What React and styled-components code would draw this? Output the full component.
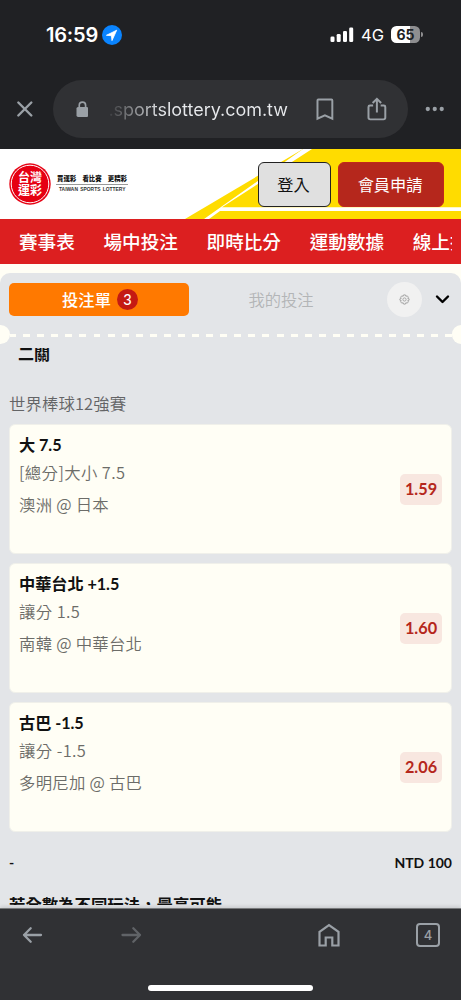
import React from 'react';
import styled, { createGlobalStyle } from 'styled-components';

const GlobalStyle = createGlobalStyle`
  * {
    box-sizing: border-box;
  }
  body {
    margin: 0;
    background: #e3e5e8;
    font-family: Lato, 'Noto Sans CJK TC', sans-serif;
  }
`;

const Screen = styled.div`
  display: flex;
  flex-direction: column;
  width: 461px;
  height: 1000px;
  overflow: hidden;
`;

const BrowserTop = styled.div`
  height: 149px;
  flex: none;
  background: #202124;
`;

const StatusBar = styled.div`
  display: flex;
  align-items: center;
  height: 80px;
  padding: 0 38px 11px 46px;
  color: #fff;
  font-family: Inter, sans-serif;
`;

const Clock = styled.span`
  width: 56px;
  font-size: 20px;
  font-weight: 600;
  letter-spacing: -0.2px;
  white-space: nowrap;
`;

const StatusRight = styled.div`
  display: flex;
  align-items: center;
  margin-left: auto;
`;

const Network = styled.span`
  width: 30px;
  margin-left: 7px;
  font-size: 16.5px;
  font-weight: 400;
`;

const Battery = styled.div`
  width: 29px;
  height: 17px;
  border-radius: 5.5px;
  background: linear-gradient(90deg, #fff 65%, #8e8e90 65%);
  color: #202124;
  font-size: 14px;
  font-weight: 700;
  line-height: 17px;
  text-align: center;
`;

const BatteryTip = styled.div`
  width: 2px;
  height: 5px;
  margin-left: 1px;
  border-radius: 0 2px 2px 0;
  background: #8e8e90;
`;

const AddressRow = styled.div`
  display: flex;
  align-items: center;
  height: 58px;
  padding: 0 16px;
`;

const AddressBar = styled.div`
  display: flex;
  align-items: center;
  width: 355px;
  height: 58px;
  margin: 0 17px 0 18px;
  padding: 0 21px 0 23px;
  border-radius: 29px;
  background: #303134;
`;

const Url = styled.span`
  width: 182px;
  margin: 0 28px 0 20px;
  font-family: Inter, sans-serif;
  font-size: 18px;
  letter-spacing: -0.03px;
  white-space: nowrap;
  color: transparent;
  background: linear-gradient(90deg, #38393c, #e8eaed 55px);
  background-clip: text;
`;

const SiteHeader = styled.header`
  display: grid;
  grid-template: 69.5px / 461px;
  flex: none;
  height: 69.5px;
  background: #fff;
  overflow: hidden;

  & > * {
    grid-area: 1 / 1;
  }
`;

const HeaderContent = styled.div`
  display: flex;
  align-items: center;
  padding: 0 17.5px 0 9px;
`;

const Slogan = styled.div`
  width: 72px;
  margin: 0 0 1px 5px;
`;

const SloganText = styled.div`
  display: flex;
  justify-content: space-between;
  padding: 0 1px;
  border-bottom: 1px solid #999;
  color: #111;
  font-size: 6.4px;
  font-weight: 900;
  line-height: 11px;
  white-space: nowrap;
`;

const SloganSub = styled.div`
  margin-left: 3px;
  color: #333;
  font: 700 4.9px/9px 'Liberation Sans', sans-serif;
  word-spacing: 1px;
  white-space: nowrap;
`;

const HeaderButton = styled.button`
  width: ${(p) => p.$width}px;
  height: 45px;
  margin-top: 1px;
  margin-left: ${(p) => p.$left};
  padding: 0 1px 0 0;
  border: ${(p) => (p.$primary ? '1px solid #c1271b' : '1.5px solid #222')};
  border-radius: 6px;
  background: ${(p) => (p.$primary ? '#b5271c' : '#e0e0e0')};
  color: ${(p) => (p.$primary ? '#fff' : '#111')};
  font-family: 'Noto Sans CJK TC', sans-serif;
  font-size: 16.2px;
`;

const Nav = styled.nav`
  display: flex;
  flex: none;
  gap: 28.7px;
  height: 45px;
  padding-left: 19px;
  border-right: 9px solid #dc1f20;
  overflow: hidden;
  background: #dc1f20;
  color: #fff;
  font: 500 18.6px/44px 'Noto Sans CJK TC', sans-serif;
  white-space: nowrap;
`;

const SlipArea = styled.main`
  flex: 1;
  min-height: 0;
  padding-top: 9.5px;
  overflow: hidden;
  background: #fffef5;
`;

const Slip = styled.section`
  display: flex;
  flex-direction: column;
  height: 100%;
  border-radius: 10px 10px 0 0;
  background: #e3e5e8;
`;

const Tabs = styled.div`
  display: flex;
  align-items: center;
  flex: none;
  height: 52px;
  padding: 0 11px 0 9px;
`;

const Tab = styled.div`
  display: flex;
  align-items: center;
  justify-content: center;
  gap: 6px;
  width: ${(p) => (p.$active ? 180 : 178)}px;
  height: 33px;
  padding-left: ${(p) => (p.$active ? 2 : 0)}px;
  margin-right: ${(p) => (p.$active ? '3px' : '17px')};
  border-radius: 5px;
  background: ${(p) => (p.$active ? '#ff7900' : 'transparent')};
  color: ${(p) => (p.$active ? '#fff' : '#b3b5b7')};
  font: ${(p) => (p.$active ? 500 : 350)} 16.3px/32px 'Noto Sans CJK TC', sans-serif;
`;

const Count = styled.span`
  width: 21px;
  height: 21px;
  border-radius: 50%;
  background: #c41a13;
  font: 500 14.5px/21px Lato, sans-serif;
  text-align: center;
`;

const Settings = styled.div`
  display: grid;
  place-items: center;
  width: 35px;
  height: 35px;
  margin-right: 13px;
  border-radius: 50%;
  background: #f1f1f1;
`;

const Perforation = styled.div`
  display: flex;
  align-items: center;
  justify-content: space-between;
  flex: none;
  height: 19px;
`;

const Notch = styled.div`
  width: 9.5px;
  height: 19px;
  border-radius: ${(p) => (p.$right ? '10px 0 0 10px' : '0 10px 10px 0')};
  background: #fffef5;
`;

const Dashes = styled.div`
  flex: 1;
  height: 2.5px;
  margin-top: 2px;
  background: repeating-linear-gradient(90deg, #fffef5 0 6px, transparent 6px 13.1px, #fffef5 13.1px 14.08px);
`;

const SlipBody = styled.div`
  flex: 1;
  min-height: 0;
  margin-top: 4px;
  padding: 0 9px;
  overflow: hidden;
`;

const Parlay = styled.div`
  margin: -7px 0 0 9px;
  height: 26px;
  color: #111;
  font-size: 16px;
  font-weight: 700;
  line-height: 26px;
`;

const League = styled.div`
  height: 57px;
  padding-top: 23px;
  color: #636466;
  font: 350 16.4px/26px 'Noto Sans CJK TC', sans-serif;
  letter-spacing: 0.1px;
`;

const BetCard = styled.article`
  display: flex;
  align-items: center;
  justify-content: space-between;
  height: 130px;
  margin-bottom: 9px;
  padding: 0 9px;
  border: 1px solid #f0f0ea;
  border-radius: 6px;
  background: #fffef5;
`;

const BetInfo = styled.div`
  align-self: flex-start;
  padding-top: 7px;
`;

const Pick = styled.div`
  color: #111;
  font-size: 16.2px;
  font-weight: 700;
  letter-spacing: -0.05px;
  line-height: 26px;
`;

const BetText = styled.div`
  height: ${(p) => p.$height}px;
  color: #6c6c68;
  font: 350 16.4px/28px 'Noto Sans CJK TC', sans-serif;
  letter-spacing: ${(p) => p.$spacing}px;
`;

const Odds = styled.div`
  width: 42px;
  height: 31px;
  border-radius: 5px;
  background: #f8e7e0;
  color: #b5271c;
  font-size: 16.3px;
  font-weight: 700;
  line-height: 30px;
  text-align: center;
`;

const StakeRow = styled.div`
  display: flex;
  justify-content: space-between;
  height: 41px;
  padding-top: 11px;
  color: #111;
  font-size: 14px;
  font-weight: 700;
  line-height: 22px;
`;

const Note = styled.div`
  height: 23px;
  overflow: hidden;
  color: #111;
  font-size: 16.4px;
  font-weight: 700;
  line-height: 45px;
`;

const BrowserBottom = styled.footer`
  display: flex;
  flex-direction: column;
  flex: none;
  height: 92px;
  border-top: 1px solid #77787a;
  background: #303134;
  box-shadow: 0 -1px 4px rgba(0, 0, 0, 0.15);
`;

const Toolbar = styled.div`
  display: flex;
  align-items: center;
  height: 51px;
  padding: 0 20px 0 22px;
`;

const Spacer = styled.div`
  width: ${(p) => p.$width}px;
`;

const TabCount = styled.div`
  width: 24px;
  height: 24px;
  border: 2px solid #9aa0a6;
  border-radius: 4px;
  color: #9aa0a6;
  font: 500 13px/20px Inter, sans-serif;
  text-align: center;
`;

const HomeIndicator = styled.div`
  width: 165px;
  height: 6px;
  margin: 25px auto 0;
  border-radius: 3px;
  background: #fff;
`;

const navItems = ['賽事表', '場中投注', '即時比分', '運動數據', '線上投注'];

const bets = [
  { pick: '大 7.5', market: '[總分]大小 7.5', match: '澳洲 @ 日本', odds: '1.59' },
  { pick: '中華台北 +1.5', market: '讓分 1.5', match: '南韓 @ 中華台北', odds: '1.60' },
  { pick: '古巴 -1.5', market: '讓分 -1.5', match: '多明尼加 @ 古巴', odds: '2.06' },
];

const LocationIcon = () => (
  <svg width="20" height="20" viewBox="0 0 20 20">
    <circle cx="10" cy="10" r="10" fill="#0a84ff" />
    <path d="M14.7 5.2 4.4 10.3 9.4 10.7 10 15.6Z" fill="#fff" stroke="#fff" strokeWidth="0.8" strokeLinejoin="round" />
  </svg>
);

const SignalIcon = () => (
  <svg width="24" height="15" viewBox="0 0 24 15" fill="#fff">
    <rect x="0.5" y="9.5" width="4" height="5.5" rx="1.3" />
    <rect x="6.7" y="7" width="4" height="8" rx="1.3" />
    <rect x="13" y="4" width="4" height="11" rx="1.3" />
    <rect x="19.2" y="0.5" width="4" height="14.5" rx="1.3" />
  </svg>
);

const CloseIcon = () => (
  <svg width="20" height="18" viewBox="0 0 20 18" fill="none" stroke="#9aa0a6" strokeWidth="2.6" strokeLinecap="round">
    <path d="M2.5 2 16.5 16M16.5 2 2.5 16" />
  </svg>
);

const LockIcon = () => (
  <svg width="13" height="17" viewBox="0 0 13 17">
    <rect x="0.5" y="6" width="12" height="10" rx="1.6" fill="#9aa0a6" />
    <path d="M3.3 7V4.2a3.2 3.2 0 0 1 6.4 0V7" fill="none" stroke="#9aa0a6" strokeWidth="1.7" />
  </svg>
);

const BookmarkIcon = () => (
  <svg width="18" height="23" viewBox="0 0 18 23" fill="none" stroke="#9aa0a6" strokeWidth="2">
    <path d="M1.5 2.3Q1.5 1.5 2.3 1.5H15.7Q16.5 1.5 16.5 2.3V20.8L9 17.3 1.5 20.8Z" />
  </svg>
);

const ShareIcon = () => (
  <svg width="20" height="24" viewBox="0 0 20 24" fill="none" stroke="#9aa0a6" strokeWidth="2">
    <path d="M6.2 8.5H3Q1.5 8.5 1.5 10V20.7Q1.5 22.5 3.3 22.5H16.7Q18.5 22.5 18.5 20.7V10Q18.5 8.5 17 8.5H13.8M10 15.5V2M5.7 6 10 1.7 14.3 6" />
  </svg>
);

const MoreIcon = () => (
  <svg width="22" height="6" viewBox="0 0 22 6" fill="#9aa0a6">
    <circle cx="3" cy="3" r="2.3" />
    <circle cx="10.5" cy="3" r="2.3" />
    <circle cx="18" cy="3" r="2.3" />
  </svg>
);

const HeaderStripes = () => (
  <svg width="461" height="70" viewBox="0 0 461 70">
    <path d="M185 70 303 0H461V70Z" fill="#ffdc00" />
    <path d="M204 70 303 0H312L222 58.3H461V62H220L209 70Z" fill="#fff" />
  </svg>
);

const Logo = () => (
  <svg width="42" height="42" viewBox="0 0 42 42">
    <circle cx="21" cy="21" r="20.7" fill="#e60012" />
    <circle cx="21" cy="21" r="18.8" fill="none" stroke="#fff" strokeWidth="1" />
    <g fill="#fff" fontFamily="'Noto Sans CJK TC', sans-serif" fontWeight="700" fontSize="12" textAnchor="middle">
      <text x="21" y="19.4">台灣</text>
      <text x="21" y="31.8">運彩</text>
    </g>
  </svg>
);

const GearIcon = () => (
  <svg width="11" height="11" viewBox="0 0 24 24" fill="none" stroke="#a0a0a0" strokeWidth="2">
    <path d="M10 2h4l1 3 3-1 2.5 3-1.5 2.5 3 1v3l-3 1 1.5 2.5-2.5 3-3-1-1 3h-4l-1-3-3 1-2.5-3L5 14.5l-3-1v-3l3-1L3.5 7 6 4l3 1Z" strokeLinejoin="round" />
    <circle cx="12" cy="12" r="3.5" />
  </svg>
);

const ChevronIcon = () => (
  <svg width="15" height="10" viewBox="0 0 15 10" fill="none" stroke="#000" strokeWidth="2.4" strokeLinecap="round" strokeLinejoin="round">
    <path d="M2 2.5 7.5 8 13 2.5" />
  </svg>
);

const ArrowIcon = ({ color, flip }) => (
  <svg width="21" height="18" viewBox="0 0 21 18" fill="none" stroke={color} strokeWidth="2.3" strokeLinecap="round" strokeLinejoin="round">
    <path d={flip ? 'M1.5 9H19M12.3 2.3 19 9 12.3 15.7' : 'M19 9H2M8.7 2.3 2 9 8.7 15.7'} />
  </svg>
);

const HomeIcon = () => (
  <svg width="23" height="24" viewBox="0 0 23 24" fill="none" stroke="#9aa0a6" strokeWidth="2.2">
    <path d="M2.5 8.8 12 2 21.5 8.8V22.5H15.3V14.5H8.7V22.5H2.5Z" />
  </svg>
);

const App = () => {
  return (
    <Screen>
      <GlobalStyle />
      <BrowserTop>
        <StatusBar>
          <Clock>16:59</Clock>
          <LocationIcon />
          <StatusRight>
            <SignalIcon />
            <Network>4G</Network>
            <Battery>65</Battery>
            <BatteryTip />
          </StatusRight>
        </StatusBar>
        <AddressRow>
          <CloseIcon />
          <AddressBar>
            <LockIcon />
            <Url>.sportslottery.com.tw</Url>
            <BookmarkIcon />
            <Spacer $width={33} />
            <ShareIcon />
          </AddressBar>
          <MoreIcon />
        </AddressRow>
      </BrowserTop>

      <SiteHeader>
        <HeaderStripes />
        <HeaderContent>
          <Logo />
          <Slogan>
            <SloganText>
              <span>買運彩</span>
              <span>看比賽</span>
              <span>更精彩</span>
            </SloganText>
            <SloganSub>TAIWAN SPORTS LOTTERY</SloganSub>
          </Slogan>
          <HeaderButton $width={73} $left="auto">登入</HeaderButton>
          <HeaderButton $width={106} $left="7px" $primary>會員申請</HeaderButton>
        </HeaderContent>
      </SiteHeader>
      <Nav>
        {navItems.map((item) => (
          <span key={item}>{item}</span>
        ))}
      </Nav>

      <SlipArea>
        <Slip>
          <Tabs>
            <Tab $active>
              投注單
              <Count>3</Count>
            </Tab>
            <Tab>我的投注</Tab>
            <Settings>
              <GearIcon />
            </Settings>
            <ChevronIcon />
          </Tabs>
          <Perforation>
            <Notch />
            <Dashes />
            <Notch $right />
          </Perforation>
          <SlipBody>
            <Parlay>二關</Parlay>
            <League>世界棒球12強賽</League>
            {bets.map((bet) => (
              <BetCard key={bet.pick}>
                <BetInfo>
                  <Pick>{bet.pick}</Pick>
                  <BetText $height={31.5} $spacing={0.4}>{bet.market}</BetText>
                  <BetText $height={28} $spacing={0.25}>{bet.match}</BetText>
                </BetInfo>
                <Odds>{bet.odds}</Odds>
              </BetCard>
            ))}
            <StakeRow>
              <span>-</span>
              <span>NTD 100</span>
            </StakeRow>
            <Note>若全數為不同玩法，最高可能</Note>
          </SlipBody>
        </Slip>
      </SlipArea>

      <BrowserBottom>
        <Toolbar>
          <ArrowIcon color="#9aa0a6" />
          <Spacer $width={78} />
          <ArrowIcon color="#606367" flip />
          <Spacer $width={175} />
          <HomeIcon />
          <Spacer $width={76} />
          <TabCount>4</TabCount>
        </Toolbar>
        <HomeIndicator />
      </BrowserBottom>
    </Screen>
  );
};

export default App;
